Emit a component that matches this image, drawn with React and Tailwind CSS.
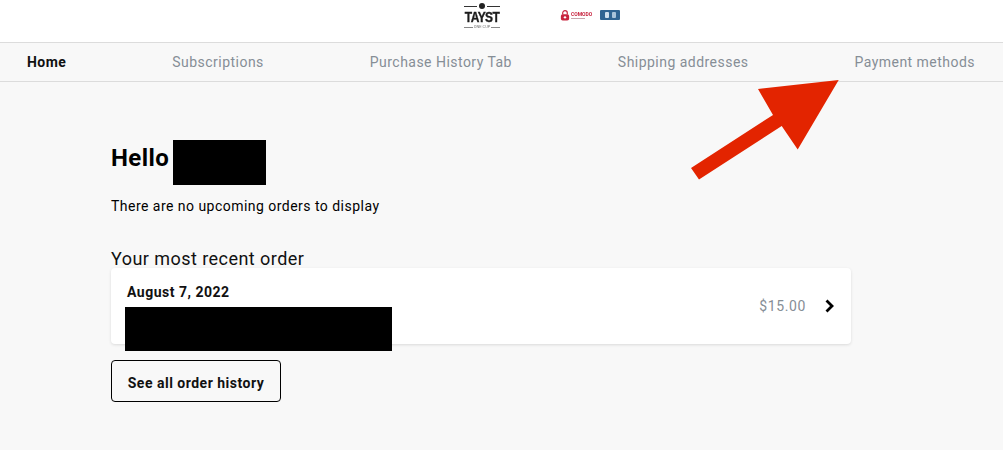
const tabs = ["Subscriptions", "Purchase History Tab", "Shipping addresses", "Payment methods"];

function TaystLogo() {
  return (
    <div className="flex w-[36px] flex-col items-center text-[#1c1c1c] blur-[0.3px]">
      <div className="flex h-[6px] w-full items-center gap-[2px]">
        <div className="h-px flex-1 bg-[#333]" />
        <div className="h-[6px] w-[6px] rounded-full bg-[#222]" />
        <div className="h-px flex-1 bg-[#333]" />
      </div>
      <div className="mt-[2px] h-[12px] scale-y-125 text-[12px] leading-[12px] font-black tracking-[-0.6px] [-webkit-text-stroke:0.3px_#1c1c1c] [font-family:'Liberation_Sans',sans-serif]">
        TAYST
      </div>
      <div className="mt-[2px] flex h-[4px] w-full items-center gap-[1px]">
        <div className="h-px flex-1 bg-[#888]" />
        <div className="text-[4px] leading-[4px] text-[#777]">ONE CUP</div>
        <div className="h-px flex-1 bg-[#888]" />
      </div>
    </div>
  );
}

function Badges() {
  return (
    <div className="flex items-center blur-[0.3px]">
      <svg width="10" height="11" viewBox="0 0 10 12">
        <path d="M2.5 5V3.2a2.5 2.5 0 0 1 5 0V5" fill="none" stroke="#c8243f" strokeWidth="1.3" />
        <rect x="0.5" y="4.5" width="9" height="7" rx="2" fill="#c8243f" />
        <circle cx="5" cy="8" r="1.3" fill="#fff" />
      </svg>
      <div className="ml-[1px] flex w-[21px] flex-col">
        <div className="text-[5px] leading-[5px] font-bold text-[#c8243f]">COMODO</div>
        <div className="mt-[1px] h-px w-[14px] bg-[#c9a5ad]" />
      </div>
      <div className="ml-[8px] flex h-[10px] w-[20px] items-center justify-center gap-[3px] rounded-[1px] bg-[#2f6492]">
        <div className="h-[6px] w-[4px] rounded-[1px] bg-[#cfe0ee]" />
        <div className="h-[6px] w-[4px] rounded-[1px] bg-[#a9c4da]" />
      </div>
    </div>
  );
}

export default function App() {
  return (
    <div className="relative h-[450px] overflow-hidden bg-[#f8f8f8] [font-family:Roboto,sans-serif]">
      <header className="flex h-[43px] items-start justify-center border-b border-[#dcdcdc] bg-white pt-[3px]">
        <div className="ml-[81px] flex items-center">
          <TaystLogo />
          <div className="ml-[60px] mt-[-2px]">
            <Badges />
          </div>
        </div>
      </header>

      <nav className="flex h-[39px] items-center justify-between border-b border-[#dcdcdc] pr-[28px] pl-[27px] text-[14px] tracking-[0.47px]">
        <span className="font-bold text-[#111]">Home</span>
        {tabs.map((tab) => (
          <span key={tab} className="text-[#868e96]">
            {tab}
          </span>
        ))}
      </nav>

      <main className="w-[851px] pt-[58px] pl-[111px] text-black">
        <div className="flex items-start">
          <h1 className="mt-[4px] w-[58px] text-[24px] leading-[28px] font-bold tracking-[0.4px]">Hello</h1>
          <div className="ml-[4px] h-[45px] w-[93px] bg-black" />
        </div>
        <p className="mt-[12px] text-[14px] leading-[18px] tracking-[0.47px]">There are no upcoming orders to display</p>

        <h2 className="mt-[33px] text-[18px] leading-[22px] tracking-[0.45px] text-[#111]">Your most recent order</h2>

        <div className="mt-[-2px] flex h-[76px] items-start justify-between rounded-[4px] bg-white pr-[16px] pl-[14px] shadow-[0_1px_3px_rgba(0,0,0,0.12)]">
          <div className="pt-[15px]">
            <div className="pl-[2px] text-[14px] leading-[18px] font-bold tracking-[0.5px] text-[#111]">August 7, 2022</div>
            <div className="mt-[6px] h-[44px] w-[267px] bg-black" />
          </div>
          <div className="flex h-full items-center">
            <span className="text-[14px] tracking-[0.6px] text-[#868e96]">$15.00</span>
            <svg className="ml-[19px]" width="10" height="14" viewBox="0 0 10 14" fill="none">
              <path d="M1.5 1.5 7 7l-5.5 5.5" stroke="#000" strokeWidth="2.8" />
            </svg>
          </div>
        </div>

        <button className="mt-[16px] h-[42px] w-[170px] rounded-[4px] border border-black pt-[4px] text-[14px] font-bold tracking-[0.5px] text-[#111]">
          See all order history
        </button>
      </main>

      {/* annotation arrow over the page */}
      <svg className="absolute top-0 left-0" width="1003" height="450" viewBox="0 0 1003 450">
        <polygon
          points="838.7,80 758,89 773,115 691,168 699,179.5 781.7,126 797.7,149.5"
          fill="#e32400"
        />
      </svg>
    </div>
  );
}
